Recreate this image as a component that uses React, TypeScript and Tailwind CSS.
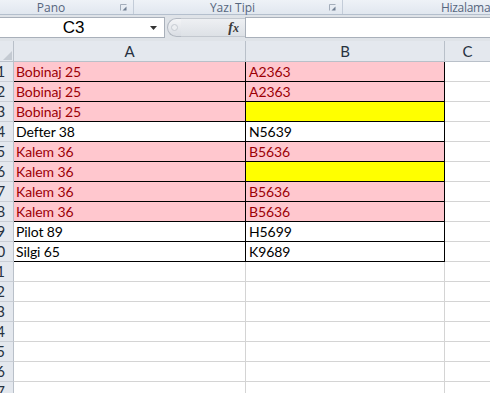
import React from "react";

const PINK = "bg-[#ffc7ce] text-[#9c0006]";
const YEL = "bg-[#ffff00]";
const WHITE = "bg-white text-black";

const rows: { a: string; b: string; aCls: string; bCls: string }[] = [
  { a: "Bobinaj 25", b: "A2363", aCls: PINK, bCls: PINK },
  { a: "Bobinaj 25", b: "A2363", aCls: PINK, bCls: PINK },
  { a: "Bobinaj 25", b: "", aCls: PINK, bCls: YEL },
  { a: "Defter 38", b: "N5639", aCls: WHITE, bCls: WHITE },
  { a: "Kalem 36", b: "B5636", aCls: PINK, bCls: PINK },
  { a: "Kalem 36", b: "", aCls: PINK, bCls: YEL },
  { a: "Kalem 36", b: "B5636", aCls: PINK, bCls: PINK },
  { a: "Kalem 36", b: "B5636", aCls: PINK, bCls: PINK },
  { a: "Pilot 89", b: "H5699", aCls: WHITE, bCls: WHITE },
  { a: "Silgi 65", b: "K9689", aCls: WHITE, bCls: WHITE },
];

function Launcher() {
  return (
    <svg width="7" height="7" viewBox="0 0 7 7" className="shrink-0">
      <path d="M0.5 6.5V0.5H6.5" fill="none" stroke="#a3adba" strokeWidth="1" />
      <path d="M2.5 6.5L6.5 2.5V6.5Z" fill="#707f92" />
    </svg>
  );
}

function RowHeader({ n }: { n: number }) {
  return (
    <div className="w-[14px] h-[20px] shrink-0 overflow-hidden bg-[#e4e8ee] border-r border-b border-r-[#b9c0c9] border-b-[#c9ced5] flex items-end justify-end pr-[8px] pb-[2px] text-[15px] leading-[15px] text-[#27323f] whitespace-nowrap">
      {n}
    </div>
  );
}

export default function App() {
  const cellFont = { fontFamily: "Lato, 'Noto Sans', sans-serif" };
  return (
    <div className="w-[490px] h-[393px] overflow-hidden bg-white select-none" style={cellFont}>
      {/* ribbon group labels */}
      <div
        className="h-[15px] flex border-b border-[#b4bfcd] bg-gradient-to-b from-[#eef2f7] to-[#e1e7ef] text-[12px] leading-[13px] text-[#56667e]"
        style={{ fontFamily: "'Open Sans', 'Noto Sans', sans-serif" }}
      >
        <div className="w-[134px] shrink-0 flex items-center border-r border-[#c3ccd8]">
          <span className="flex-1 text-center pr-[18px]">Pano</span>
          <Launcher />
          <span className="w-[6px]" />
        </div>
        <div className="w-[209px] shrink-0 flex items-center border-r border-[#c3ccd8]">
          <span className="flex-1 text-center pl-[2px] whitespace-nowrap">Yazı Tipi</span>
          <Launcher />
          <span className="w-[6px]" />
        </div>
        <div className="flex-1 flex items-center pl-[98px] whitespace-nowrap overflow-hidden">
          <span className="tracking-[-0.3px]">Hizalama</span>
        </div>
      </div>

      {/* formula bar */}
      <div className="h-[26px] bg-[#dfe3e8] flex items-start pt-[2px]">
        <div className="w-[165px] h-[21px] shrink-0 bg-white border-y border-r border-[#a9b0ba] flex items-center">
          <span
            className="flex-1 text-center text-[17px] leading-none text-black pr-[3px]"
            style={{ fontFamily: "'Liberation Sans', Arial, sans-serif" }}
          >
            C3
          </span>
          <svg width="7" height="4" viewBox="0 0 7 4" className="mr-[7px]">
            <path d="M0 0H7L3.5 4Z" fill="#333" />
          </svg>
        </div>
        <div className="w-[80px] h-[21px] shrink-0 flex items-center">
          <div className="ml-[2px] w-[14px] h-[19px] rounded-l-full border border-r-0 border-[#b3b9c2] bg-gradient-to-b from-[#f4f5f7] to-[#d9dde3] flex items-center pl-[3px]">
            <div className="w-[7px] h-[7px] rounded-full border border-[#c6cbd2] bg-[#eceef1]" />
          </div>
          <div className="flex-1 h-[19px] bg-gradient-to-b from-[#eef0f3] to-[#dde1e6] border-y border-[#c3c8cf] flex items-center justify-end pr-[6px]">
            <span
              className="italic font-bold text-[14px] leading-none text-[#3a3a3a]"
              style={{ fontFamily: "'Liberation Serif', 'Times New Roman', serif" }}
            >
              f<span className="text-[12px]">x</span>
            </span>
          </div>
        </div>
        <div className="flex-1 h-[21px] bg-white border border-r-0 border-[#a9b0ba]" />
      </div>

      {/* column headers */}
      <div className="flex h-[21px] text-[15px] leading-[15px] text-[#27323f]">
        <div className="w-[14px] shrink-0 bg-[#e4e8ee] border-r border-b border-[#b9c0c9] flex items-end justify-end p-[1px]">
          <svg width="9" height="9" viewBox="0 0 9 9">
            <path d="M9 0V9H0Z" fill="#c4cad2" />
          </svg>
        </div>
        <div className="w-[232px] shrink-0 bg-[#e4e8ee] border-r border-b border-[#b9c0c9] flex items-end justify-center pb-[2px]">
          A
        </div>
        <div className="w-[199px] shrink-0 bg-[#e4e8ee] border-r border-b border-[#b9c0c9] flex items-end justify-center pb-[2px]">
          B
        </div>
        <div className="flex-1 bg-[#e4e8ee] border-b border-[#b9c0c9] flex items-end justify-center pb-[2px]">
          C
        </div>
      </div>

      {/* data rows */}
      {rows.map((r, i) => (
        <div key={i} className="flex h-[20px] text-[14px] leading-[15px] tracking-[-0.1px]">
          <RowHeader n={i + 1} />
          <div className={`w-[232px] shrink-0 border-r border-b border-black flex items-end pb-[2px] pl-[2px] ${r.aCls}`}>
            {r.a}
          </div>
          <div className={`w-[199px] shrink-0 border-r border-b border-black flex items-end pb-[2px] pl-[3px] ${r.bCls}`}>
            {r.b}
          </div>
          <div className="flex-1 border-b border-[#d4d4d4]" />
        </div>
      ))}
      {[11, 12, 13, 14, 15, 16, 17].map((n) => (
        <div key={n} className="flex h-[20px]">
          <RowHeader n={n} />
          <div className="w-[232px] shrink-0 border-r border-b border-[#d4d4d4]" />
          <div className="w-[199px] shrink-0 border-r border-b border-[#d4d4d4]" />
          <div className="flex-1 border-b border-[#d4d4d4]" />
        </div>
      ))}
    </div>
  );
}
